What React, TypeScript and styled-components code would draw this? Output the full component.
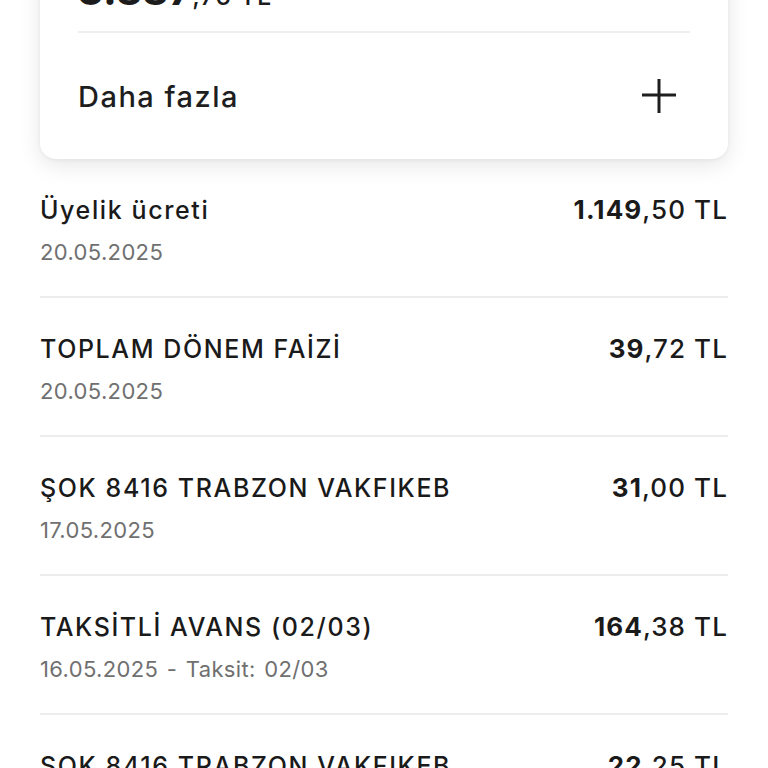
import React from 'react';
import styled, { createGlobalStyle } from 'styled-components';

const GlobalStyle = createGlobalStyle`
  html, body {
    margin: 0;
    padding: 0;
    background: #ffffff;
    overflow: hidden;
  }
  body {
    font-family: 'Inter', 'Noto Sans', sans-serif;
    color: #1c1c1c;
    -webkit-font-smoothing: antialiased;
  }
`;

interface Transaction {
  title: string;
  date: string;
  whole: string;
  fraction: string;
}

const transactions: Transaction[] = [
  { title: 'Üyelik ücreti', date: '20.05.2025', whole: '1.149', fraction: ',50 TL' },
  { title: 'TOPLAM DÖNEM FAİZİ', date: '20.05.2025', whole: '39', fraction: ',72 TL' },
  { title: 'ŞOK 8416 TRABZON VAKFIKEB', date: '17.05.2025', whole: '31', fraction: ',00 TL' },
  { title: 'TAKSİTLİ AVANS (02/03)', date: '16.05.2025 - Taksit: 02/03', whole: '164', fraction: ',38 TL' },
  { title: 'ŞOK 8416 TRABZON VAKFIKEB', date: '15.05.2025', whole: '22', fraction: ',25 TL' },
];

// page is scrolled: the top of the summary card sits above the viewport
const Page = styled.div`
  margin-top: -55px;
  padding: 0 40px;
`;

const SummaryCard = styled.section`
  background: #ffffff;
  border-radius: 16px;
  box-shadow: 0 6px 22px rgba(0, 0, 0, 0.1), 0 1px 4px rgba(0, 0, 0, 0.05);
  padding: 0 38px;
`;

const BalanceBlock = styled.div`
  height: 88px;
  display: flex;
  align-items: flex-end;
  padding-bottom: 15px;
  box-sizing: border-box;
  border-bottom: 2px solid #eeeeee;
`;

const Balance = styled.div`
  font-size: 38px;
  line-height: 40px;
  font-weight: 800;
  letter-spacing: 1px;

  span {
    font-size: 25px;
    font-weight: 500;
  }
`;

const MoreRow = styled.div`
  height: 126px;
  display: flex;
  align-items: center;
  justify-content: space-between;
`;

const MoreLabel = styled.span`
  font-size: 29px;
  font-weight: 500;
  letter-spacing: 1.5px;
  color: #1e1e1e;
`;

const PlusButton = styled.button`
  border: none;
  background: none;
  padding: 0;
  margin-right: 13px;
  display: flex;
  color: #1e1e1e;
`;

const List = styled.ul`
  list-style: none;
  margin: 0;
  padding: 0;
`;

const Row = styled.li`
  padding: 36px 0 30px;
  border-bottom: 2px solid #ececec;
`;

const RowHead = styled.div`
  display: flex;
  justify-content: space-between;
  align-items: baseline;
`;

const Title = styled.span`
  font-size: 25px;
  line-height: 30px;
  font-weight: 500;
  letter-spacing: 1.6px;
  color: #1a1a1a;
`;

const Amount = styled.span`
  font-size: 26px;
  line-height: 30px;
  font-weight: 500;
  letter-spacing: 1.1px;
  color: #1a1a1a;

  b {
    font-weight: 700;
  }
`;

const DateLine = styled.div`
  margin-top: 13px;
  font-size: 22px;
  line-height: 28px;
  letter-spacing: 0.35px;
  word-spacing: 2px;
  color: #707070;
`;

const PlusIcon: React.FC = () => (
  <svg width="36" height="36" viewBox="0 0 36 36" fill="none">
    <line x1="18" y1="1" x2="18" y2="35" stroke="currentColor" strokeWidth="3" />
    <line x1="1" y1="17" x2="35" y2="17" stroke="currentColor" strokeWidth="3" />
  </svg>
);

export default function App() {
  return (
    <>
      <GlobalStyle />
      <Page>
        <SummaryCard>
          <BalanceBlock>
            <Balance>
              3.887<span>,76 TL</span>
            </Balance>
          </BalanceBlock>
          <MoreRow>
            <MoreLabel>Daha fazla</MoreLabel>
            <PlusButton aria-label="Daha fazla">
              <PlusIcon />
            </PlusButton>
          </MoreRow>
        </SummaryCard>
        <List>
          {transactions.map((t, i) => (
            <Row key={i}>
              <RowHead>
                <Title>{t.title}</Title>
                <Amount>
                  <b>{t.whole}</b>
                  {t.fraction}
                </Amount>
              </RowHead>
              <DateLine>{t.date}</DateLine>
            </Row>
          ))}
        </List>
      </Page>
    </>
  );
}
